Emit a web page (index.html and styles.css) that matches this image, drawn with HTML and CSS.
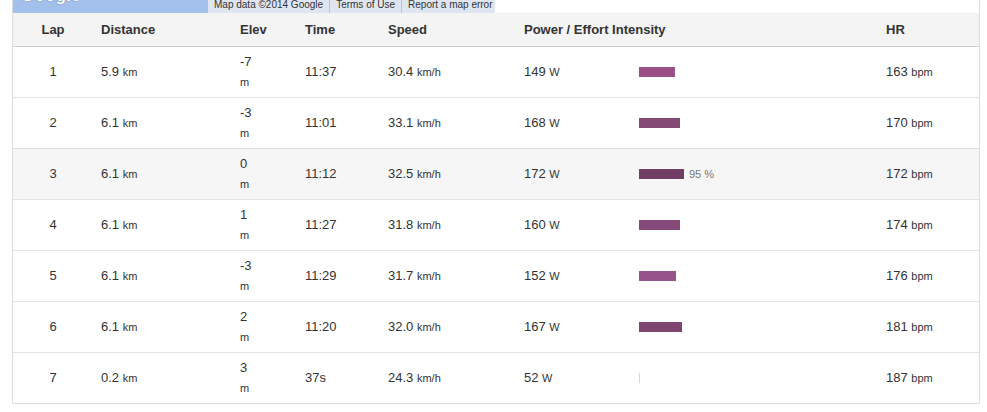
FILE: index.html
```html
<!DOCTYPE html>
<html>
<head>
<meta charset="utf-8">
<link rel="stylesheet" href="styles.css">
</head>
<body>
<div class="panel">
  <div class="map">
    <div class="map-left"><span class="glogo">Google</span></div>
    <div class="attrib">
      <span class="att-item">Map data ©2014 Google</span>
      <span class="att-item">Terms of Use</span>
      <span class="att-item">Report a map error</span>
    </div>
  </div>
  <table class="laps">
    <colgroup>
      <col class="c-lap"><col class="c-dist"><col class="c-elev"><col class="c-time"><col class="c-speed"><col class="c-power"><col class="c-hr">
    </colgroup>
    <thead>
      <tr><th class="center">Lap</th><th>Distance</th><th>Elev</th><th>Time</th><th>Speed</th><th>Power / Effort Intensity</th><th>HR</th></tr>
    </thead>
    <tbody>
      <tr>
        <td class="center">1</td><td>5.9 <span class="u">km</span></td><td>-7<span class="u blk">m</span></td><td>11:37</td><td>30.4 <span class="u">km/h</span></td>
        <td><div class="pw"><span class="pv">149 <span class="u">W</span></span><span class="bar" style="width:36px;background:#9b4f87"></span></div></td><td>163 <span class="u">bpm</span></td>
      </tr>
      <tr>
        <td class="center">2</td><td>6.1 <span class="u">km</span></td><td>-3<span class="u blk">m</span></td><td>11:01</td><td>33.1 <span class="u">km/h</span></td>
        <td><div class="pw"><span class="pv">168 <span class="u">W</span></span><span class="bar" style="width:41px;background:#844a76"></span></div></td><td>170 <span class="u">bpm</span></td>
      </tr>
      <tr class="hover">
        <td class="center">3</td><td>6.1 <span class="u">km</span></td><td>0<span class="u blk">m</span></td><td>11:12</td><td>32.5 <span class="u">km/h</span></td>
        <td><div class="pw"><span class="pv">172 <span class="u">W</span></span><span class="bar" style="width:45px;background:#723d65"></span><span class="pct">95 %</span></div></td><td>172 <span class="u">bpm</span></td>
      </tr>
      <tr>
        <td class="center">4</td><td>6.1 <span class="u">km</span></td><td>1<span class="u blk">m</span></td><td>11:27</td><td>31.8 <span class="u">km/h</span></td>
        <td><div class="pw"><span class="pv">160 <span class="u">W</span></span><span class="bar" style="width:41px;background:#854a77"></span></div></td><td>174 <span class="u">bpm</span></td>
      </tr>
      <tr>
        <td class="center">5</td><td>6.1 <span class="u">km</span></td><td>-3<span class="u blk">m</span></td><td>11:29</td><td>31.7 <span class="u">km/h</span></td>
        <td><div class="pw"><span class="pv">152 <span class="u">W</span></span><span class="bar" style="width:37px;background:#97528a"></span></div></td><td>176 <span class="u">bpm</span></td>
      </tr>
      <tr>
        <td class="center">6</td><td>6.1 <span class="u">km</span></td><td>2<span class="u blk">m</span></td><td>11:20</td><td>32.0 <span class="u">km/h</span></td>
        <td><div class="pw"><span class="pv">167 <span class="u">W</span></span><span class="bar" style="width:43px;background:#7d456f"></span></div></td><td>181 <span class="u">bpm</span></td>
      </tr>
      <tr>
        <td class="center">7</td><td>0.2 <span class="u">km</span></td><td>3<span class="u blk">m</span></td><td>37s</td><td>24.3 <span class="u">km/h</span></td>
        <td><div class="pw"><span class="pv">52 <span class="u">W</span></span><span class="bar" style="width:1px;background:#e2d2dd"></span></div></td><td>187 <span class="u">bpm</span></td>
      </tr>
    </tbody>
  </table>
</div>
</body>
</html>
```

FILE: styles.css
```css
html, body {
  margin: 0;
  padding: 0;
  background: #fff;
}
body {
  font-family: "Liberation Sans", Arial, Helvetica, sans-serif;
  color: #333;
  font-size: 13px;
}
.panel {
  margin-left: 12px;
  width: 966px;
  border-left: 1px solid #dcdcdc;
  border-right: 1px solid #dcdcdc;
  border-bottom: 1px solid #dcdcdc;
}
.map {
  display: flex;
  height: 13px;
  overflow: hidden;
}
.map-left {
  width: 195px;
  background: #a3bfeb;
  overflow: hidden;
}
.glogo {
  display: block;
  margin-top: -13px;
  margin-left: 8px;
  font-size: 17px;
  line-height: 17px;
  font-weight: bold;
  color: #fff;
  text-shadow: 0 0 1px #5a7fb8, 0 0 1px #5a7fb8;
  letter-spacing: 0.2px;
}
.attrib {
  display: flex;
  background: #dfe6f2;
  width: 287px;
  overflow: hidden;
}
.att-item {
  display: block;
  padding: 0 6px;
  font-family: "Liberation Sans", Arial, sans-serif;
  font-size: 10px;
  line-height: 13px;
  margin-top: -2px;
  color: #333;
  white-space: nowrap;
  border-left: 1px solid #b3c6e6;
}
.att-item:first-child {
  border-left: none;
}
.laps {
  width: 966px;
  border-collapse: collapse;
  table-layout: fixed;
}
.c-lap { width: 80px; }
.c-dist { width: 139px; }
.c-elev { width: 65px; }
.c-time { width: 83px; }
.c-speed { width: 136px; }
.c-power { width: 362px; }
.c-hr { width: 101px; }
.laps th {
  background: #f4f4f4;
  height: 33px;
  padding: 0 8px;
  text-align: left;
  font-weight: bold;
  font-size: 13px;
  color: #333;
  border-bottom: 1px solid #cfcfcf;
}
.laps td {
  height: 50px;
  padding: 0 8px;
  border-bottom: 1px solid #e2e2e2;
  vertical-align: middle;
  line-height: 20px;
  white-space: nowrap;
}
.laps tbody tr:last-child td {
  border-bottom: none;
}
.laps .center {
  text-align: center;
}
.laps tr.hover td {
  background: #f6f6f6;
}
.u {
  font-size: 11px;
}
.blk {
  display: block;
}
.pw {
  display: flex;
  align-items: center;
}
.pv {
  width: 115px;
  flex: none;
}
.bar {
  display: block;
  height: 10px;
  flex: none;
}
.pct {
  margin-left: 5px;
  font-size: 11px;
  color: #777;
}
```
